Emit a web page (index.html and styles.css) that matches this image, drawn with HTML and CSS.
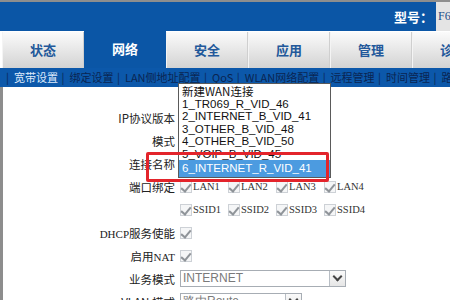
FILE: index.html
```html
<!DOCTYPE html>
<html>

<head>
    <meta charset="utf-8">
    <title>网络 - WAN连接</title>
    <link rel="stylesheet" href="styles.css">
</head>

<body>
    <div class="page">
        <div class="header">
            <div class="header-main"><span class="model-label">型号：</span></div>
            <div class="model-value">F660</div>
        </div>

        <ul class="tabs">
            <li>状态</li>
            <li class="active">网络</li>
            <li>安全</li>
            <li>应用</li>
            <li>管理</li>
            <li>诊断</li>
        </ul>

        <div class="subnav">
            <span class="sep">|</span><span class="current">宽带设置</span>
            <span class="sep">|</span><span>绑定设置</span>
            <span class="sep">|</span><span>LAN侧地址配置</span>
            <span class="sep">|</span><span>QoS</span>
            <span class="sep">|</span><span>WLAN网络配置</span>
            <span class="sep">|</span><span>远程管理</span>
            <span class="sep">|</span><span>时间管理</span>
            <span class="sep">|</span><span>路由配置</span>
        </div>

        <div class="content">
            <div class="form">
                <label>IP协议版本</label><div></div>
                <label>模式</label><div></div>
                <label>连接名称</label><div></div>

                <label>端口绑定</label>
                <div class="checks">
                    <span class="check"><i class="cb"></i>LAN1</span>
                    <span class="check"><i class="cb"></i>LAN2</span>
                    <span class="check"><i class="cb"></i>LAN3</span>
                    <span class="check"><i class="cb"></i>LAN4</span>
                </div>
                <label></label>
                <div class="checks">
                    <span class="check"><i class="cb"></i>SSID1</span>
                    <span class="check"><i class="cb"></i>SSID2</span>
                    <span class="check"><i class="cb"></i>SSID3</span>
                    <span class="check"><i class="cb"></i>SSID4</span>
                </div>

                <label><span class="latin">DHCP</span>服务使能</label>
                <div class="checks"><span class="check"><i class="cb"></i></span></div>
                <label>启用<span class="latin">NAT</span></label>
                <div class="checks"><span class="check"><i class="cb"></i></span></div>

                <label>业务模式</label>
                <div class="select wide"><span class="value">INTERNET</span><span class="arrow"></span></div>
                <label>VLAN 模式</label>
                <div class="select narrow"><span class="value">路由Route</span><span class="arrow"></span></div>
            </div>
        </div>

        <!-- 展开的连接名称下拉框 -->
        <ul class="dropdown">
            <li>新建WAN连接</li>
            <li>1_TR069_R_VID_46</li>
            <li>2_INTERNET_B_VID_41</li>
            <li>3_OTHER_B_VID_48</li>
            <li>4_OTHER_B_VID_50</li>
            <li>5_VOIP_B_VID_45</li>
            <li class="selected">6_INTERNET_R_VID_41</li>
        </ul>
        <div class="highlight"></div>
    </div>
</body>

</html>
```

FILE: styles.css
```css
* {
    margin: 0;
    padding: 0;
    list-style: none;
    box-sizing: border-box;
}

body {
    background: #fff;
    font-family: "Noto Sans CJK SC", sans-serif;
}

.page {
    position: relative;
    width: 450px;
    height: 300px;
    overflow: hidden;
    border-top: 2px solid #8e8e8e;
}

/* 顶部蓝条 */
.header {
    display: flex;
    height: 29px;
}

.header-main {
    width: 436px;
    background: #0b56a6;
    display: flex;
    align-items: center;
    justify-content: flex-end;
    padding-right: 3px;
}

.model-label {
    color: #fff;
    font-size: 13px;
    font-weight: bold;
}

.model-value {
    flex: 1;
    background: #e4e4e4;
    color: #1d4e8a;
    font-family: "Liberation Serif", serif;
    font-size: 12px;
    display: flex;
    align-items: center;
    padding-left: 2px;
    white-space: nowrap;
    overflow: hidden;
}

/* 主菜单 */
.tabs {
    display: flex;
    padding-left: 2px;
    padding-top: 1px;
    background: #fff;
    white-space: nowrap;
}

.tabs li {
    flex: 0 0 82px;
    height: 36px;
    line-height: 36px;
    text-align: center;
    font-size: 13px;
    font-weight: bold;
    color: #22589a;
    background: linear-gradient(#fbfbfb, #e9e9e9 45%, #d3d3d3);
    border-left: 1px solid #f4f4f4;
    border-right: 1px solid #cfcfcf;
}

.tabs li.active {
    background: #0b56a6;
    color: #fff;
    border-color: #0b56a6;
    margin-top: -1px;
    height: 37px;
}

/* 二级菜单 */
.subnav {
    height: 19px;
    line-height: 18px;
    background: #0c58aa;
    color: #0a2552;
    font-size: 11px;
    padding-left: 5px;
    white-space: nowrap;
    overflow: hidden;
}

.subnav .sep {
    margin-right: 5px;
    margin-left: 1px;
}

.subnav .current {
    color: #dce9fb;
}

/* 表单 */
.content {
    border-left: 3px solid #8d8d8d;
    padding-top: 19px;
    height: 230px;
}

.form {
    display: grid;
    grid-template-columns: 172px auto;
    grid-auto-rows: 23px;
    column-gap: 5px;
    align-items: center;
}

.form label {
    text-align: right;
    font-size: 11.5px;
    color: #222;
    white-space: nowrap;
}

.form .latin {
    font-family: "Liberation Serif", serif;
    font-size: 11px;
}

.checks {
    display: flex;
}

.check {
    width: 48px;
    display: flex;
    align-items: center;
    font-family: "Liberation Serif", serif;
    font-size: 10.5px;
    color: #333;
}

.cb {
    position: relative;
    width: 12px;
    height: 12px;
    border: 1px solid #cdd1d6;
    background: #f5f6f7;
    margin-right: 1px;
}

.cb:after {
    content: "";
    position: absolute;
    left: 2px;
    top: 0;
    width: 4px;
    height: 8px;
    border-right: 2px solid #8f9499;
    border-bottom: 2px solid #8f9499;
    transform: rotate(40deg);
}

.select {
    display: flex;
    height: 17px;
    border: 1px solid #a7adb4;
    background: #fff;
    font-family: "Liberation Sans", sans-serif;
    font-size: 12px;
    color: #7a7a7a;
}

.select.wide {
    width: 166px;
}

.select.narrow {
    width: 122px;
}

.select .value {
    flex: 1;
    line-height: 15px;
    padding-left: 2px;
}

.select .arrow {
    position: relative;
    width: 16px;
    border-left: 1px solid #b8bec5;
    background: linear-gradient(#fafafa, #e6e6e6);
}

.select .arrow:after {
    content: "";
    position: absolute;
    left: 4px;
    top: 2px;
    width: 5px;
    height: 5px;
    border-right: 2px solid #444;
    border-bottom: 2px solid #444;
    transform: rotate(45deg);
}

/* 下拉列表与标注框 */
.dropdown {
    position: absolute;
    left: 178px;
    top: 81px;
    width: 153px;
    border: 1px solid #5a5a5a;
    background: #fff;
    font-family: "Liberation Sans", sans-serif;
    font-size: 11.5px;
    color: #111;
    padding-top: 1px;
}

.dropdown li {
    height: 12.4px;
    line-height: 12.4px;
    padding-left: 3px;
    white-space: nowrap;
    overflow: hidden;
}

.dropdown li:first-child {
    font-family: "Noto Sans CJK SC", sans-serif;
    height: 13px;
}

.dropdown li.selected {
    height: 17px;
    line-height: 17px;
    background: #4c9be0;
    color: #fff;
}

.highlight {
    position: absolute;
    left: 146px;
    top: 150px;
    width: 183px;
    height: 30px;
    border: 3px solid #e3242b;
    border-radius: 2px;
}
```
